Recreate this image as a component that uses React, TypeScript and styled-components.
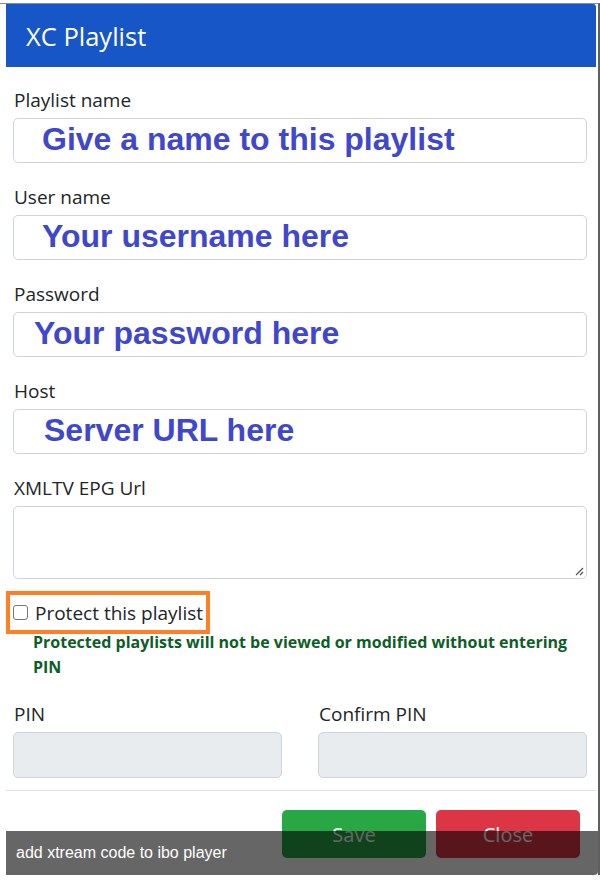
import React from "react";
import styled, { createGlobalStyle } from "styled-components";

const GlobalStyle = createGlobalStyle`
  html, body {
    margin: 0;
    padding: 0;
    background: #ffffff;
  }
  * {
    box-sizing: border-box;
  }
`;

const Screen = styled.div`
  position: relative;
  width: 600px;
  height: 880px;
  padding-top: 3px;
  overflow: hidden;
  font-family: "Segoe UI", "Open Sans", sans-serif;
  color: #212529;
`;

const Frame = styled.div`
  height: 872px;
  border-top: 1px solid #8c8c8c;
  border-right: 2px solid #5f5f5f;
  padding-left: 6px;
`;

const Modal = styled.div`
  width: 590px;
  background: #ffffff;
`;

const Header = styled.div`
  display: flex;
  align-items: center;
  height: 63px;
  padding: 0 20px;
  background: #1756c6;
  border-radius: 0 3px 0 0;
  color: #ffffff;
  font-size: 25.5px;
`;

const Body = styled.div`
  padding: 20px 9px 12px 7px;
`;

const Group = styled.div`
  margin-bottom: 21px;
`;

const Label = styled.label`
  display: block;
  padding-left: 1px;
  margin-bottom: 4px;
  font-size: 19px;
  line-height: 27px;
  color: #212529;
`;

const Field = styled.div<{ $indent?: number; $disabled?: boolean }>`
  display: flex;
  align-items: center;
  height: 45px;
  padding-left: ${(p) => p.$indent ?? 28}px;
  padding-bottom: 3px;
  border: 1px solid #ced4da;
  border-radius: 5px;
  background: ${(p) => (p.$disabled ? "#e9ecef" : "#ffffff")};
`;

const Scribble = styled.span`
  font-family: "Liberation Sans", Arial, sans-serif;
  font-weight: 700;
  font-size: 32px;
  color: #3f48cc;
  white-space: nowrap;
`;

const TextArea = styled.div`
  position: relative;
  height: 73px;
  border: 1px solid #ced4da;
  border-radius: 5px;
`;

const Grip = styled.svg`
  position: absolute;
  right: 2px;
  bottom: 2px;
`;

const CheckRow = styled.div`
  margin-top: 16px;
`;

const Highlight = styled.label`
  display: inline-flex;
  align-items: center;
  gap: 7px;
  height: 35px;
  margin-left: -3px;
  padding: 0 3px;
  outline: 4px solid #ff7f27;
  font-size: 19px;
  color: #212529;
`;

const Box = styled.span`
  width: 15px;
  height: 15px;
  border: 1px solid #767676;
  border-radius: 3px;
  background: #ffffff;
`;

const Hint = styled.div`
  margin-left: 20px;
  font-size: 16px;
  font-weight: 700;
  line-height: 25px;
  color: #0b5e26;
`;

const PinRow = styled.div`
  display: grid;
  grid-template-columns: 1fr 1fr;
  gap: 36px;
  margin-top: 21px;
`;

const PinField = styled(Field)`
  height: 46px;
`;

const Footer = styled.div`
  display: flex;
  justify-content: flex-end;
  gap: 10px;
  padding: 19px 16px 16px 0;
  border-top: 1px solid #dee2e6;
`;

const Button = styled.button<{ $tone: "save" | "close" }>`
  width: 144px;
  height: 48px;
  border: none;
  border-radius: 5px;
  background: ${(p) => (p.$tone === "save" ? "#28a745" : "#dc3545")};
  color: #ffffff;
  font-family: "Segoe UI", "Open Sans", sans-serif;
  font-size: 20px;
`;

const Caption = styled.div`
  position: absolute;
  left: 6px;
  top: 831px;
  display: flex;
  align-items: center;
  width: 592px;
  height: 44px;
  padding-left: 10px;
  background: rgba(0, 0, 0, 0.6);
  border-radius: 0 0 4px 0;
  color: #ffffff;
  font-family: "Liberation Sans", Arial, sans-serif;
  font-size: 16px;
`;

const fields = [
  { label: "Playlist name", note: "Give a name to this playlist", indent: 28 },
  { label: "User name", note: "Your username here", indent: 28 },
  { label: "Password", note: "Your password here", indent: 20 },
  { label: "Host", note: "Server URL here", indent: 30 },
];

export default function App() {
  return (
    <>
      <GlobalStyle />
      <Screen>
        <Frame>
          <Modal>
            <Header>XC Playlist</Header>
            <Body>
              {fields.map((f) => (
                <Group key={f.label}>
                  <Label>{f.label}</Label>
                  <Field $indent={f.indent}>
                    <Scribble>{f.note}</Scribble>
                  </Field>
                </Group>
              ))}

              <Label>XMLTV EPG Url</Label>
              <TextArea>
                <Grip width="10" height="10" viewBox="0 0 10 10">
                  <path d="M9 2 L2 9 M9 6 L6 9" stroke="#555" strokeWidth="1.2" />
                </Grip>
              </TextArea>

              <CheckRow>
                <Highlight>
                  <Box />
                  Protect this playlist
                </Highlight>
                <Hint>
                  Protected playlists will not be viewed or modified without entering PIN
                </Hint>
              </CheckRow>

              <PinRow>
                <div>
                  <Label>PIN</Label>
                  <PinField $disabled />
                </div>
                <div>
                  <Label>Confirm PIN</Label>
                  <PinField $disabled />
                </div>
              </PinRow>
            </Body>
            <Footer>
              <Button $tone="save">Save</Button>
              <Button $tone="close">Close</Button>
            </Footer>
          </Modal>
        </Frame>
        <Caption>add xtream code to ibo player</Caption>
      </Screen>
    </>
  );
}
